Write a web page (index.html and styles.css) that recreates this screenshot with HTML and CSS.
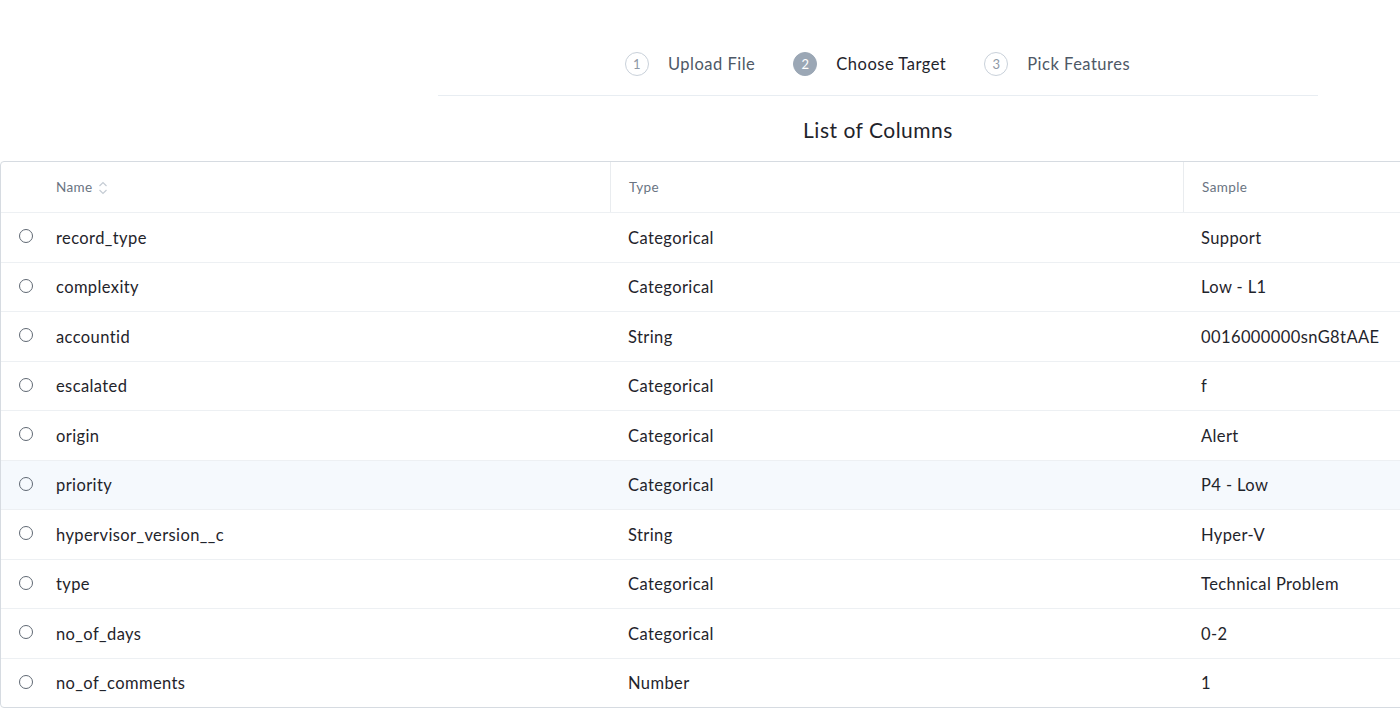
FILE: index.html
```html
<!DOCTYPE html>
<html>
<head>
<meta charset="utf-8">
<link rel="stylesheet" href="styles.css">
</head>
<body>
<div class="page">
  <div class="top">
    <div class="steps">
      <div class="step"><span class="num">1</span><span class="label">Upload File</span></div>
      <div class="step active"><span class="num">2</span><span class="label">Choose Target</span></div>
      <div class="step"><span class="num">3</span><span class="label">Pick Features</span></div>
    </div>
    <h1 class="title">List of Columns</h1>
  </div>
  <div class="table">
    <div class="row head">
      <div class="c radio"></div>
      <div class="c name">Name
        <svg class="sort" width="10" height="16" viewBox="0 0 10 16"><path d="M1.5 6 L5 2.5 L8.5 6" fill="none" stroke="#c5ccd4" stroke-width="1.2"/><path d="M1.5 10 L5 13.5 L8.5 10" fill="none" stroke="#c5ccd4" stroke-width="1.2"/></svg>
      </div>
      <div class="c type">Type</div>
      <div class="c sample">Sample</div>
    </div>
    <div class="row"><div class="c radio"><span class="rb"></span></div><div class="c name">record_type</div><div class="c type">Categorical</div><div class="c sample">Support</div></div>
    <div class="row"><div class="c radio"><span class="rb"></span></div><div class="c name">complexity</div><div class="c type">Categorical</div><div class="c sample">Low - L1</div></div>
    <div class="row"><div class="c radio"><span class="rb"></span></div><div class="c name">accountid</div><div class="c type">String</div><div class="c sample">0016000000snG8tAAE</div></div>
    <div class="row"><div class="c radio"><span class="rb"></span></div><div class="c name">escalated</div><div class="c type">Categorical</div><div class="c sample">f</div></div>
    <div class="row"><div class="c radio"><span class="rb"></span></div><div class="c name">origin</div><div class="c type">Categorical</div><div class="c sample">Alert</div></div>
    <div class="row hover"><div class="c radio"><span class="rb"></span></div><div class="c name">priority</div><div class="c type">Categorical</div><div class="c sample">P4 - Low</div></div>
    <div class="row"><div class="c radio"><span class="rb"></span></div><div class="c name">hypervisor_version__c</div><div class="c type">String</div><div class="c sample">Hyper-V</div></div>
    <div class="row"><div class="c radio"><span class="rb"></span></div><div class="c name">type</div><div class="c type">Categorical</div><div class="c sample">Technical Problem</div></div>
    <div class="row"><div class="c radio"><span class="rb"></span></div><div class="c name">no_of_days</div><div class="c type">Categorical</div><div class="c sample">0-2</div></div>
    <div class="row"><div class="c radio"><span class="rb"></span></div><div class="c name">no_of_comments</div><div class="c type">Number</div><div class="c sample">1</div></div>
  </div>
</div>
</body>
</html>
```

FILE: styles.css
```css
html, body {
  margin: 0;
  padding: 0;
  background: #fff;
  overflow: hidden;
}
body {
  font-family: "Lato", "Liberation Sans", sans-serif;
  color: #1f242b;
  width: 1400px;
  height: 710px;
}
.page {
  width: 1400px;
}
.top {
  width: 880px;
  margin-left: 438px;
}
.steps {
  height: 96px;
  border-bottom: 1px solid #e8edf2;
  display: flex;
  align-items: flex-start;
  justify-content: center;
  gap: 38px;
  box-sizing: border-box;
  padding-top: 52px;
  padding-right: 1px;
}
.step {
  display: flex;
  align-items: center;
  gap: 19px;
  height: 24px;
}
.num {
  width: 22px;
  height: 22px;
  border: 1px solid #c9d1da;
  border-radius: 50%;
  display: flex;
  align-items: center;
  justify-content: center;
  font-size: 13px;
  color: #8e99a6;
}
.label {
  font-size: 16.5px;
  color: #4e5866;
  letter-spacing: 0.5px;
}
.step.active .num {
  background: #9ba7b5;
  border-color: #9ba7b5;
  color: #fff;
}
.step.active .label {
  color: #1f242b;
}
.title {
  margin: 0;
  height: 65px;
  padding-top: 2px;
  box-sizing: border-box;
  display: flex;
  align-items: center;
  justify-content: center;
  font-size: 21px;
  font-weight: 400;
  color: #1f242b;
  letter-spacing: 0.5px;
}
.table {
  width: 1420px;
  border: 1px solid #d6dbe1;
  border-radius: 4px;
  box-sizing: border-box;
}
.row {
  display: flex;
  height: 49.5px;
  border-top: 1px solid #edf0f3;
  box-sizing: border-box;
  align-items: stretch;
}
.row.head {
  border-top: none;
  height: 50px;
}
.row.hover {
  background: #f5f9fd;
}
.c {
  display: flex;
  align-items: center;
  font-size: 16.5px;
  letter-spacing: 0.4px;
  box-sizing: border-box;
  padding-top: 1px;
}
.radio {
  width: 55px;
  padding-left: 18px;
}
.name {
  width: 554px;
}
.type {
  width: 573px;
  padding-left: 18px;
}
.sample {
  flex: 1;
  padding-left: 18px;
}
.head .c {
  font-size: 13.5px;
  letter-spacing: 0.4px;
  color: #6a7482;
  padding-top: 0;
}
.head .type, .head .sample {
  border-left: 1px solid #e9ecef;
}
.sort {
  margin-left: 5px;
  margin-top: 1px;
}
.rb {
  width: 12px;
  height: 12px;
  border: 1.3px solid #5f6873;
  border-radius: 50%;
  box-sizing: content-box;
  margin-top: -3px;
}
```
